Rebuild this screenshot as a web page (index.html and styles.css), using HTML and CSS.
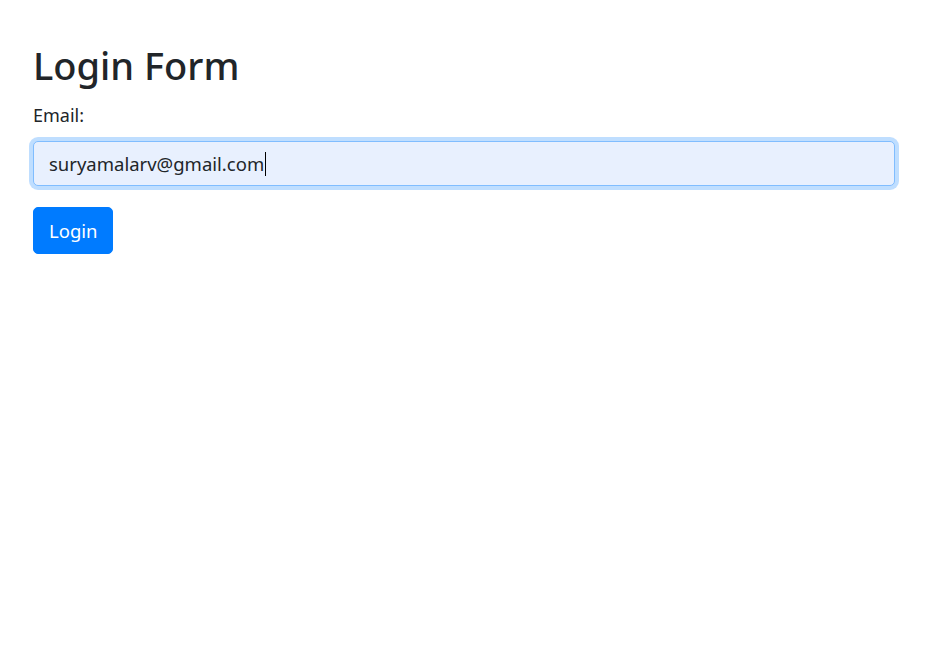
FILE: index.html
```html
<!DOCTYPE html>
<html lang="en">
<head>
<meta charset="utf-8">
<title>Login Form</title>
<link rel="stylesheet" href="styles.css">
</head>
<body>
<div class="page">
  <h1 class="title">Login Form</h1>
  <form class="form">
    <div class="group">
      <label class="label" for="email">Email:</label>
      <div class="field" id="email" role="textbox">suryamalarv@gmail.com<span class="caret"></span></div>
    </div>
    <button type="button" class="btn">Login</button>
  </form>
</div>
</body>
</html>
```
FILE: styles.css
```css
html, body {
  margin: 0;
  padding: 0;
  background: #fff;
}
body {
  font-family: "Noto Sans", "Open Sans", sans-serif;
  color: #212529;
}
.page {
  padding: 41px 35px 0 33px;
}
.title {
  margin: 0 0 14px 0;
  font-size: 38px;
  font-weight: 500;
  line-height: 48px;
  color: #212529;
}
.form {
  display: flex;
  flex-direction: column;
  align-items: flex-start;
}
.group {
  align-self: stretch;
  display: flex;
  flex-direction: column;
  margin-bottom: 21px;
}
.label {
  font-size: 18px;
  line-height: 24px;
  margin-bottom: 14px;
}
.field {
  box-sizing: border-box;
  height: 45px;
  display: flex;
  align-items: center;
  padding: 0 15px;
  border: 1px solid #80bdff;
  border-radius: 5px;
  background: #e8f0fe;
  box-shadow: 0 0 0 4px rgba(0, 123, 255, 0.25);
  font-size: 18.5px;
  color: #212529;
}
.caret {
  display: inline-block;
  width: 1px;
  height: 24px;
  background: #000;
  margin-left: 1px;
}
.btn {
  box-sizing: border-box;
  height: 47px;
  padding: 0 15px;
  border: 1px solid #007bff;
  border-radius: 5px;
  background: #007bff;
  color: #fff;
  font-family: inherit;
  font-size: 18.5px;
  cursor: pointer;
}
```
